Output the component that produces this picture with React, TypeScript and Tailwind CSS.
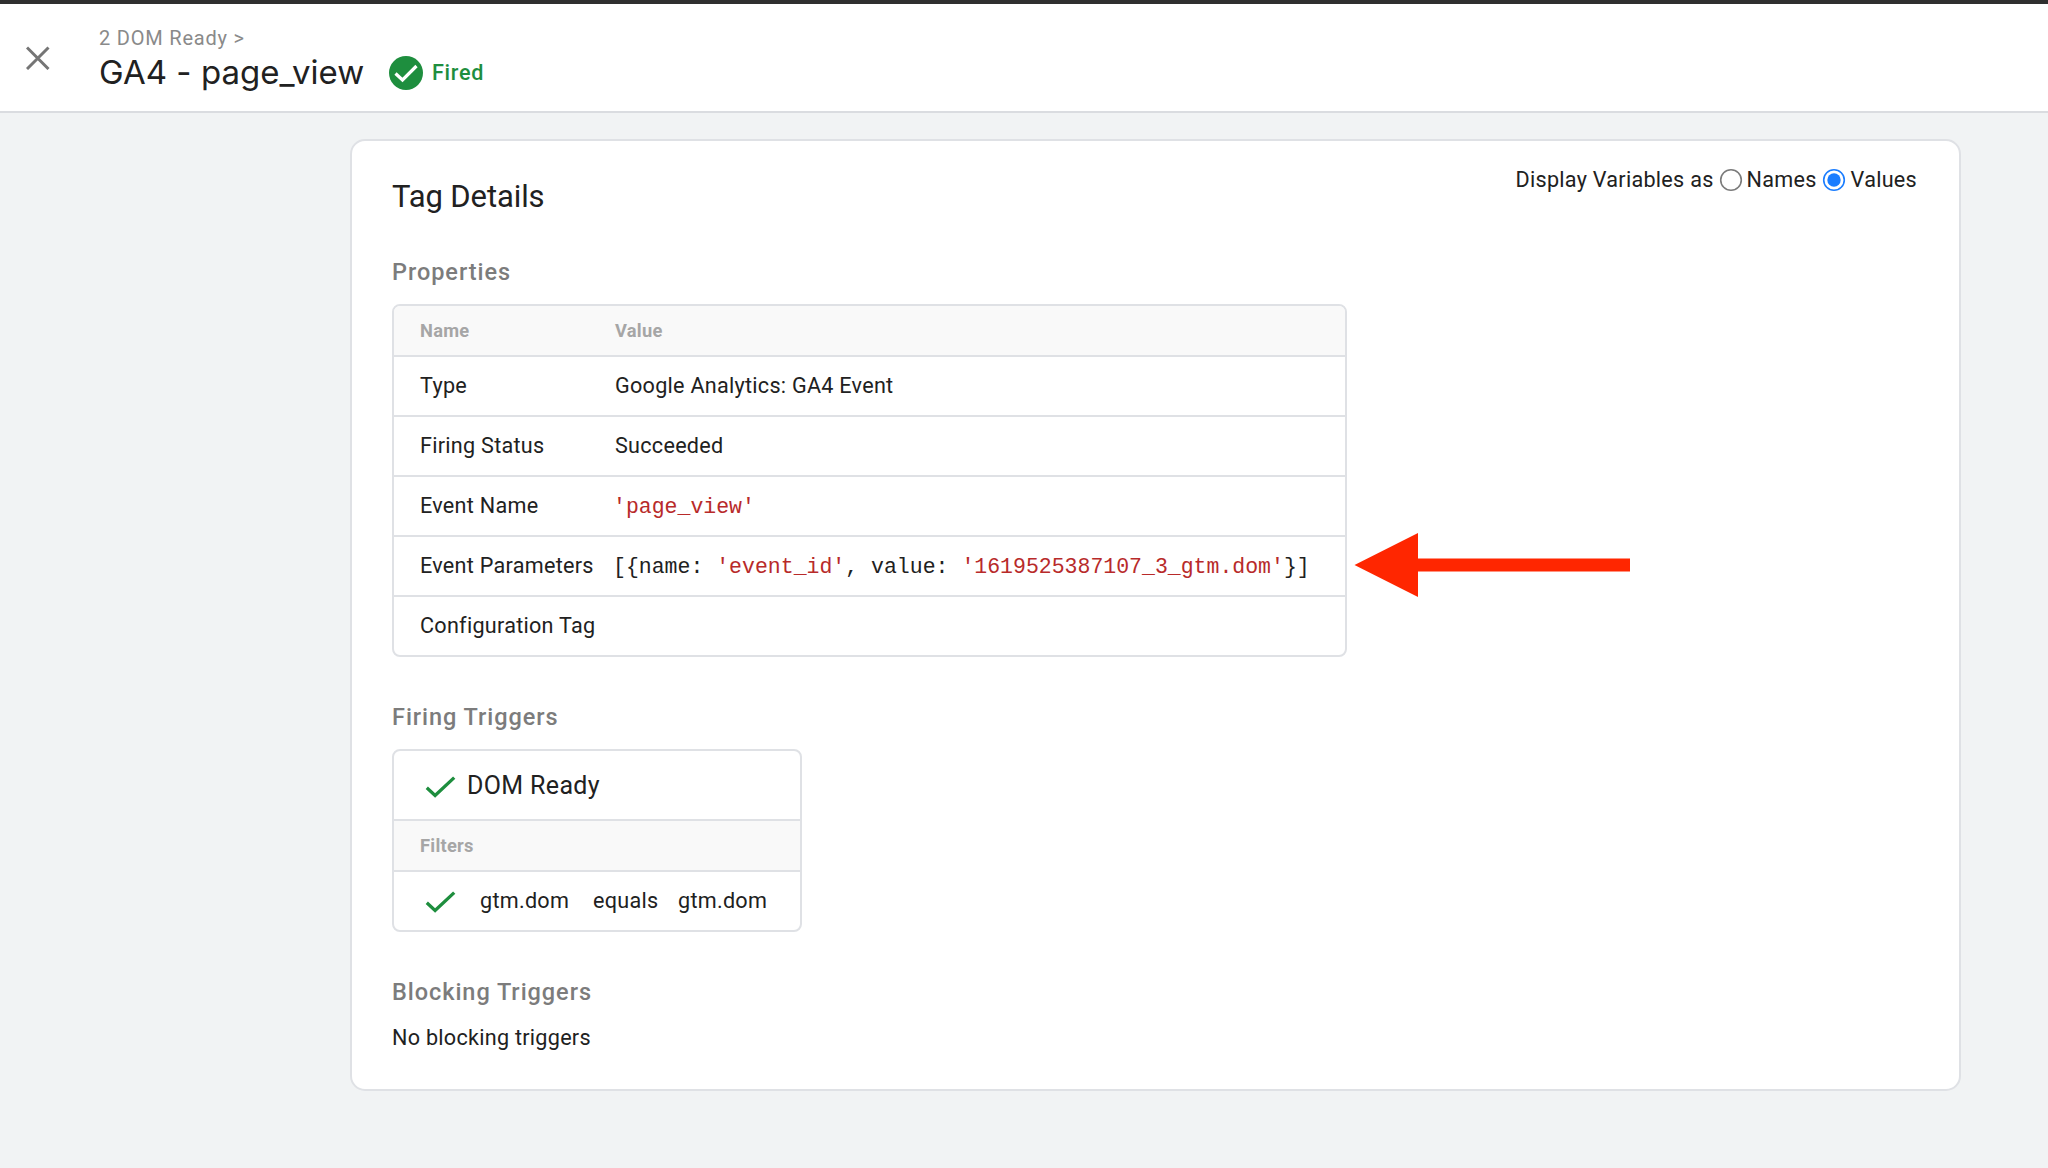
import React from "react";

const properties: { name: string; value: React.ReactNode; mono?: boolean }[] = [
  { name: "Type", value: "Google Analytics: GA4 Event" },
  { name: "Firing Status", value: "Succeeded" },
  { name: "Event Name", value: <Str>'page_view'</Str>, mono: true },
  {
    name: "Event Parameters",
    value: (
      <>
        {"[{name: "}
        <Str>'event_id'</Str>
        {", value: "}
        <Str>'1619525387107_3_gtm.dom'</Str>
        {"}]"}
      </>
    ),
    mono: true,
  },
  { name: "Configuration Tag", value: "" },
];

function Str({ children }: { children: React.ReactNode }) {
  return <span className="text-[#b82a2a]">{children}</span>;
}

function Check() {
  return (
    <svg width="31" height="22" viewBox="0 0 31 22" fill="none" className="shrink-0">
      <path d="M1.8 11.8 L10.1 19.4 L29.2 1.6" stroke="#1e8e3e" strokeWidth="3.3" />
    </svg>
  );
}

function Radio({ checked }: { checked?: boolean }) {
  return (
    <svg width="24" height="24" viewBox="0 0 24 24" fill="none" className="shrink-0">
      <circle cx="12" cy="12" r="10.3" stroke={checked ? "#1a7dff" : "#7b7b7b"} strokeWidth="1.6" />
      {checked && <circle cx="12" cy="12" r="6.7" fill="#1a7dff" />}
    </svg>
  );
}

function SectionTitle({ children, className }: { children: string; className: string }) {
  return (
    <h3 className={"text-[23.5px] leading-[30px] font-medium tracking-[0.95px] text-[#7c7c7c] " + className}>
      {children}
    </h3>
  );
}

export default function App() {
  return (
    <div className="flex h-[1168px] flex-col overflow-hidden bg-[#f1f3f4] font-['Roboto',sans-serif] text-[21.6px] tracking-[0.27px] text-[#212121]">
      <header className="flex h-[113px] shrink-0 border-t-4 border-b-2 border-t-[#2f2f2f] border-b-[#dadce0] bg-white">
        <svg width="24" height="24" viewBox="0 0 24 24" className="mt-[42px] ml-[26px] shrink-0">
          <path d="M1 1.5 L22.5 23 M22.5 1.5 L1 23" stroke="#757575" strokeWidth="3" />
        </svg>
        <div className="ml-[49px]">
          <div className="mt-[21px] text-[20px] leading-[26px] tracking-[0.8px] text-[#8a8a8a]">2 DOM Ready &gt;</div>
          <div className="-mt-[1px] flex items-center">
            <h1 className="w-[290px] pb-[2px] font-['Inter',sans-serif] text-[33px] leading-[44px] tracking-[0.03px] whitespace-nowrap">
              GA4 - page_view
            </h1>
            <svg width="34" height="34" viewBox="0 0 34 34" fill="none" className="shrink-0">
              <circle cx="17" cy="17" r="17" fill="#1e8e3e" />
              <path d="M6.5 17.5 L13.5 24 L27.5 10" stroke="#fff" strokeWidth="3.2" />
            </svg>
            <span className="ml-[9px] font-medium tracking-[0.7px] text-[#1e8e3e]">Fired</span>
          </div>
        </div>
      </header>

      <main className="mt-[26px] ml-[350px] h-[952px] w-[1611px] shrink-0 rounded-[15px] border-2 border-[#dfe1e5] bg-white pt-[38px] pr-[42px] pl-[40px]">
        <div className="flex items-start justify-between">
          <h2 className="text-[31px] leading-[36px] tracking-[-0.1px]">Tag Details</h2>
          <div className="-mt-[14px] flex items-center leading-[30px]">
            <span>Display Variables as</span>
            <span className="ml-[5px] flex"><Radio /></span>
            <span className="ml-[4px]">Names</span>
            <span className="ml-[5px] flex"><Radio checked /></span>
            <span className="ml-[5px]">Values</span>
          </div>
        </div>

        <SectionTitle className="mt-[42px]">Properties</SectionTitle>
        <div className="mt-[17px] flex items-center">
          <div className="w-[955px] shrink-0 overflow-hidden rounded-[8px] border-2 border-[#dfe1e5]">
            <div className="flex h-[51px] items-center border-b-2 border-[#dfe1e5] bg-[#f9f9f9] pl-[26px] text-[18.3px] font-bold text-[#a6a6a6]">
              <span className="w-[195px]">Name</span>
              <span>Value</span>
            </div>
            {properties.map((p) => (
              <div key={p.name} className="flex h-[60px] items-center border-b-2 border-[#dfe1e5] last:h-[58px] last:border-b-0">
                <span className="w-[221px] shrink-0 pl-[26px] whitespace-nowrap">{p.name}</span>
                <span
                  className={
                    p.mono
                      ? "-ml-[2px] pt-[3px] font-['Liberation_Mono',monospace] text-[21.5px] tracking-normal whitespace-pre"
                      : "whitespace-pre"
                  }
                >
                  {p.value}
                </span>
              </div>
            ))}
          </div>
          <svg width="277" height="64" viewBox="0 0 277 64" className="mt-[169px] ml-[7px] shrink-0">
            <path d="M0.5 32 L64 0 V25.6 H276 V38.4 H64 V64 Z" fill="#ff2600" />
          </svg>
        </div>

        <SectionTitle className="mt-[45px]">Firing Triggers</SectionTitle>
        <div className="mt-[17px] w-[410px] overflow-hidden rounded-[8px] border-2 border-[#dfe1e5]">
          <div className="flex h-[70px] items-center border-b-2 border-[#dfe1e5] pl-[31px] text-[25px]">
            <span className="mt-[4px] flex"><Check /></span>
            <span className="mt-[1px] ml-[11px] tracking-[0.35px]">DOM Ready</span>
          </div>
          <div className="flex h-[51px] items-center border-b-2 border-[#dfe1e5] bg-[#f9f9f9] pl-[26px] text-[18.3px] font-bold text-[#a6a6a6]">
            Filters
          </div>
          <div className="flex h-[58px] items-center pl-[31px]">
            <span className="mt-[2px] flex"><Check /></span>
            <span className="ml-[24px] w-[113px]">gtm.dom</span>
            <span className="w-[85px]">equals</span>
            <span>gtm.dom</span>
          </div>
        </div>

        <SectionTitle className="mt-[45px]">Blocking Triggers</SectionTitle>
        <p className="mt-[16px] leading-[30px]">No blocking triggers</p>
      </main>
    </div>
  );
}
